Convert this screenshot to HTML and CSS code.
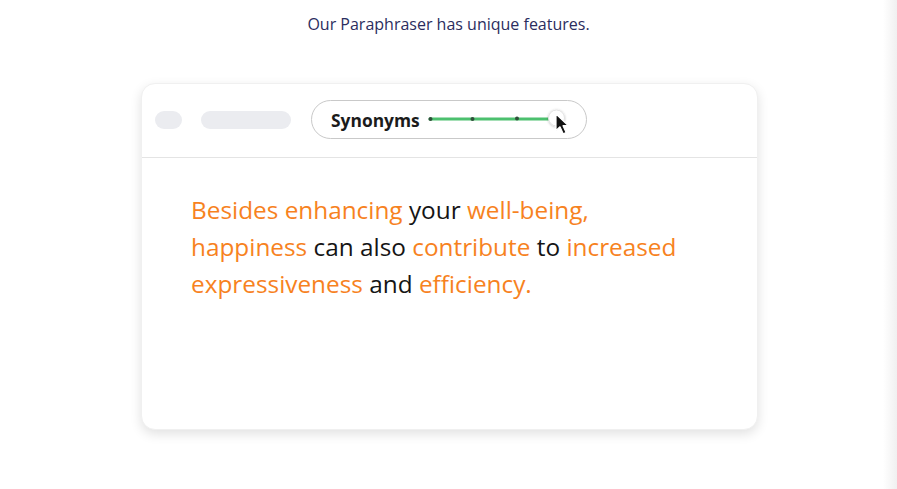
FILE: index.html
```html
<!DOCTYPE html>
<html lang="en">
<head>
<meta charset="utf-8">
<title>Paraphraser features</title>
<link rel="stylesheet" href="styles.css">
</head>
<body>
<main class="page">
  <p class="intro">Our Paraphraser has unique features.</p>
  <section class="card">
    <div class="card-head">
      <span class="skel skel-sm"></span>
      <span class="skel skel-lg"></span>
      <div class="mode-pill">
        <span class="mode-label">Synonyms</span>
        <svg class="slider" width="146" height="37" viewBox="0 0 146 37" aria-hidden="true">
          <defs>
            <filter id="ks" x="-50%" y="-50%" width="200%" height="200%">
              <feDropShadow dx="0" dy="0.5" stdDeviation="1" flood-color="#000" flood-opacity="0.25"/>
            </filter>
          </defs>
          <line x1="2" y1="18" x2="126" y2="18" stroke="#4cc06e" stroke-width="3.2" stroke-linecap="round"/>
          <circle cx="2.5" cy="18" r="2" fill="#2f4f3a"/>
          <circle cx="44.5" cy="18" r="2" fill="#2f4f3a"/>
          <circle cx="89" cy="17.6" r="2" fill="#2f4f3a"/>
          <circle cx="128.5" cy="17" r="8" fill="#fff" stroke="#e2e2e2" stroke-width="1" filter="url(#ks)"/>
          <path d="M128 13 L128 29.5 L132 25.8 L135.2 32.8 L138.1 31.6 L135 24.7 L140.4 24.7 Z" fill="#111" stroke="#fff" stroke-width="1.2" stroke-linejoin="round"/>
        </svg>
      </div>
    </div>
    <div class="card-body">
      <p class="sample"><span class="hl">Besides enhancing</span> your <span class="hl">well-being,</span> <span class="hl">happiness</span> can also <span class="hl">contribute</span> to <span class="hl">increased</span> <span class="hl">expressiveness</span> and <span class="hl">efficiency.</span></p>
    </div>
  </section>
</main>
</body>
</html>
```

FILE: styles.css
```css
html, body {
  margin: 0;
  padding: 0;
}

body {
  font-family: "Open Sans", "Noto Sans", sans-serif;
  background: linear-gradient(to right, #ffffff 0, #ffffff calc(100% - 14px), #f0f0f0 100%);
  min-height: 489px;
}

.page {
  display: flex;
  flex-direction: column;
  align-items: center;
  padding-top: 12px;
}

.intro {
  margin: 0;
  font-size: 16px;
  line-height: 24px;
  color: #2b2d5e;
}

.card {
  margin-top: 47px;
  margin-left: 2px;
  width: 617px;
  height: 347px;
  box-sizing: border-box;
  background: #fff;
  border-radius: 14px;
  border: 1px solid #f0f0f0;
  box-shadow: 0 4px 12px rgba(0, 0, 0, 0.12);
  display: flex;
  flex-direction: column;
}

.card-head {
  height: 74px;
  border-bottom: 1px solid #e4e4e4;
  display: flex;
  align-items: center;
  padding-left: 13px;
  padding-bottom: 2px;
  box-sizing: border-box;
  gap: 19px;
}

.skel {
  display: block;
  height: 18px;
  border-radius: 9px;
  background: #ebecf0;
}

.skel-sm {
  width: 27px;
}

.skel-lg {
  width: 90px;
  margin-right: 1px;
}

.mode-pill {
  width: 276px;
  height: 39px;
  box-sizing: border-box;
  border: 1px solid #c9c9c9;
  border-radius: 20px;
  display: flex;
  align-items: center;
  padding-left: 19px;
}

.mode-label {
  font-weight: 700;
  font-size: 17.4px;
  color: #1b1b1b;
  line-height: 22px;
  margin-right: 8px;
}

.slider {
  display: block;
}

.card-body {
  padding: 33px 0 0 49px;
}

.sample {
  margin: 0;
  width: 500px;
  font-size: 24.35px;
  line-height: 37px;
  color: #151515;
}

.hl {
  color: #f7821e;
}
```
